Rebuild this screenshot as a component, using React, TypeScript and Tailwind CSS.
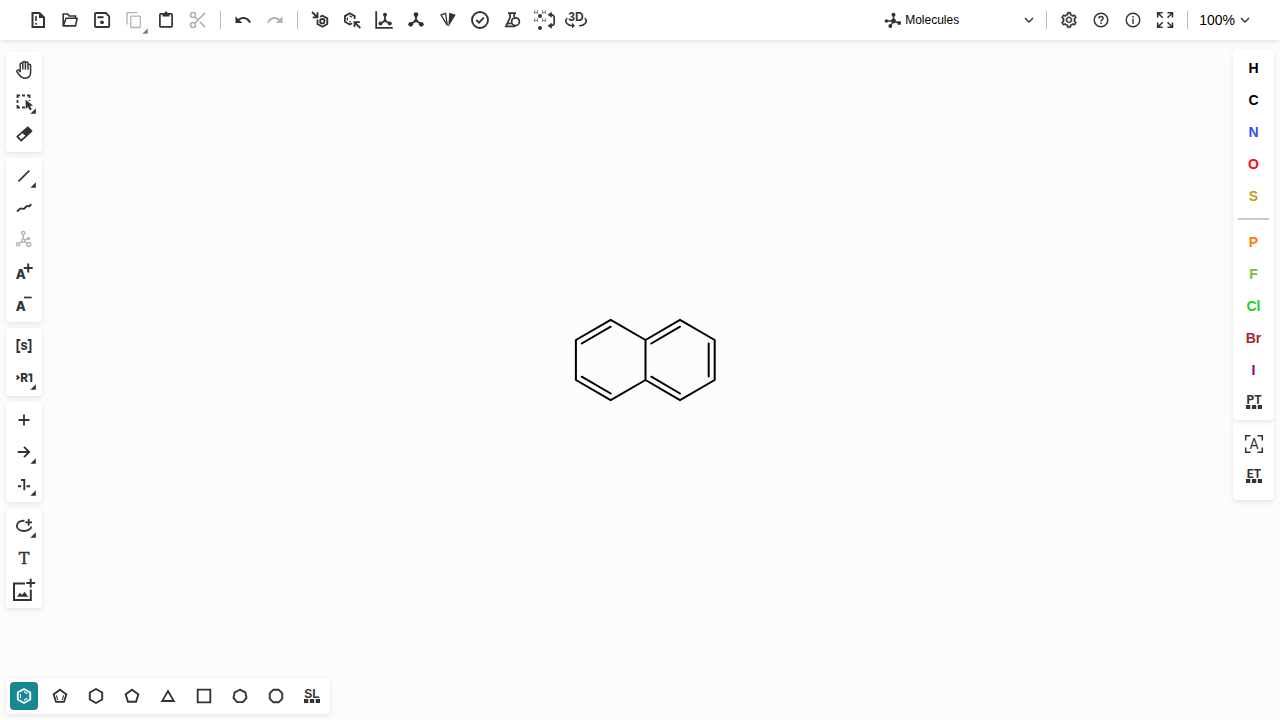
import React from "react";
import { Scissors } from "lucide-react";
import { AiOutlineSetting } from "react-icons/ai";

type Tool = { label: string; icon: React.ReactNode; more?: boolean; disabled?: boolean };

function Svg({ children, w = 2 }: { children: React.ReactNode; w?: number }) {
  return (
    <svg viewBox="0 0 24 24" width={24} height={24} fill="none" stroke="currentColor" strokeWidth={w} aria-hidden="true">
      {children}
    </svg>
  );
}

function Corner() {
  return (
    <svg viewBox="0 0 6 6" width={6} height={6} fill="currentColor" aria-hidden="true">
      <path d="M5.800 .3v5.500H.3z" />
    </svg>
  );
}

function ToolButton({ tool, corner }: { tool: Tool; corner: string }) {
  return (
    <button
      type="button"
      title={tool.label}
      aria-label={tool.label}
      disabled={tool.disabled}
      className="relative flex h-8 w-8 items-center justify-center text-[#333333] disabled:text-[#b3b3b3]"
    >
      {tool.icon}
      {tool.more && <span className={corner}><Corner /></span>}
    </button>
  );
}

function Tri({ stroke = 2 }: { stroke?: number }) {
  return (
    <Svg w={stroke}>
      <path d="M12 7v5.700L7 16M12 12.700L17 16" />
      <g fill="currentColor" stroke="none">
        <circle cx="12" cy="6.700" r="2.400" />
        <circle cx="12" cy="12.500" r="1.700" />
        <circle cx="6.700" cy="16.300" r="2.400" />
        <circle cx="17.300" cy="16.300" r="2.400" />
      </g>
    </Svg>
  );
}

function Dotted({ text, font }: { text: string; font: string }) {
  return (
    <Svg>
      <g fill="currentColor" stroke="none">
        <text x="12" y="14" textAnchor="middle" fontSize="12" fontWeight="700" className={font}>{text}</text>
        <path d="M4 15h4.300v4H4zM9.900 15h4.300v4H9.900zM15.700 15H20v4h-4.300z" />
      </g>
    </Svg>
  );
}

const fileTools: Tool[] = [
  {
    label: "Clear Canvas",
    icon: (
      <Svg>
        <path d="M6.500 5h7l4.500 4.500V19H6.500z" />
        <path d="M13 4l6 6H13z" fill="currentColor" stroke="none" />
        <path d="M10 8v5M10 14.800v2" strokeWidth="1.600" />
      </Svg>
    ),
  },
  {
    label: "Open",
    icon: (
      <Svg w={1.6}>
        <path d="M5.200 17.800V6h4.500l1.500 2h6.300v2" />
        <path d="M5.300 17.900L8 10.200h11.200l-1.700 7.700z" strokeLinejoin="round" />
      </Svg>
    ),
  },
  {
    label: "Save",
    icon: (
      <Svg w={1.8}>
        <path d="M6 5h9.800L19.200 8.400V18q0 1-1 1H6q-1 0-1-1V6q0-1 1-1z" />
        <path d="M7.500 9.200h6" strokeWidth="2" />
        <circle cx="12" cy="14.300" r="1.900" fill="currentColor" stroke="none" />
      </Svg>
    ),
  },
  {
    label: "Copy",
    disabled: true,
    more: true,
    icon: (
      <Svg w={1.3}>
        <path d="M5 16.500V4.700h10.500" />
        <rect x="8.700" y="8.200" width="9.600" height="11.300" rx="0.800" />
      </Svg>
    ),
  },
  {
    label: "Paste",
    icon: (
      <Svg w={1.7}>
        <rect x="5.900" y="5.900" width="12.200" height="12.900" rx="0.800" />
        <path d="M8.500 5.500h2a1.600 1.600 0 013 0h2v3h-7z" fill="currentColor" stroke="none" />
        <circle cx="12" cy="4.800" r="1.400" fill="currentColor" stroke="none" />
      </Svg>
    ),
  },
  { label: "Cut", disabled: true, icon: <Scissors size={20} strokeWidth={2} /> },
];

const undoPath =
  "M12.500 8c-2.650 0-5.050.990-6.900 2.600L2 7v9h9l-3.620-3.620c1.390-1.160 3.160-1.880 5.120-1.880 3.540 0 6.550 2.310 7.600 5.500l2.370-.780C21.080 11.030 17.150 8 12.500 8z";

const historyTools: Tool[] = [
  {
    label: "Undo",
    icon: <svg viewBox="0 0 24 24" width={18} height={18} fill="currentColor" aria-hidden="true"><path d={undoPath} /></svg>,
  },
  {
    label: "Redo",
    disabled: true,
    icon: (
      <svg viewBox="0 0 24 24" width={18} height={18} fill="currentColor" aria-hidden="true">
        <path d={undoPath} transform="matrix(-1 0 0 1 24 0)" />
      </svg>
    ),
  },
];

const structureTools: Tool[] = [
  {
    label: "Aromatize",
    icon: (
      <Svg w={1.8}>
        <path d="M4 4l5 5M9.500 4.300v5H4.700" />
        <path d="M12 8.800L14.500 7.700l4.800 2.700v5.600l-4.800 2.800L9.500 16v-4.500" />
        <circle cx="14.300" cy="13.200" r="2.200" />
      </Svg>
    ),
  },
  {
    label: "Dearomatize",
    icon: (
      <Svg w={1.8}>
        <path d="M12 15.300L9.800 16.500 4.900 13.700V8.100L9.800 5.300l4.900 2.800V11" />
        <path d="M7.300 9.500v3M9.500 7.700l2.700 1.500M9.300 14l1.500-.800" strokeWidth="1.300" />
        <path d="M20.300 20l-5.500-5.500M14.500 19v-4.800h5.300" />
      </Svg>
    ),
  },
  {
    label: "Layout",
    icon: (
      <Svg w={1.8}>
        <path d="M4.200 3.300v16.500h16.500" />
        <path d="M13 7v5.700l-4.500 2.800M13 12.700l4.700 2.800" />
        <g fill="currentColor" stroke="none">
          <circle cx="13" cy="6.700" r="2" />
          <circle cx="13" cy="12.500" r="1.500" />
          <circle cx="8.500" cy="15.500" r="2" />
          <circle cx="17.800" cy="15.500" r="2" />
        </g>
      </Svg>
    ),
  },
  { label: "Clean Up", icon: <Tri /> },
  {
    label: "Calculate CIP",
    icon: (
      <Svg w={1.3}>
        <path d="M5 6.900l4.600-1.600 1.700 12z" />
        <path d="M13.300 4.700l6.400 2L12.300 19z" fill="currentColor" stroke="none" />
      </Svg>
    ),
  },
  {
    label: "Check Structure",
    icon: (
      <Svg w={1.9}>
        <circle cx="12" cy="12" r="8" />
        <path d="M8.300 12l2.700 2.600 4.800-5" />
      </Svg>
    ),
  },
  {
    label: "Calculated Values",
    icon: (
      <Svg w={1.7}>
        <path d="M8 5.200h8M10 5.500v4.300L5.800 18.400h9.500M14.200 5.500v3.500" />
        <circle cx="15.500" cy="13.700" r="3.900" />
        <path d="M7.300 15.500h4" />
      </Svg>
    ),
  },
  {
    label: "Add/Remove explicit hydrogens",
    icon: (
      <Svg w={1.7}>
        <g fill="currentColor" stroke="none" fontSize="6" className="font-['Liberation_Sans']">
          <text x="1.800" y="6">H</text>
          <text x="9.800" y="6">H</text>
          <text x="1.800" y="14">H</text>
          <text x="9.800" y="14">H</text>
          <circle cx="8" cy="8" r="2" />
          <circle cx="8" cy="20" r="2" />
          <path d="M19.800 3.700v6L15.500 6.700zM19.800 14.700v6l-4.300-3z" />
        </g>
        <path d="M18 6.700q4.200 0 4.200 3v5q0 3-4.200 3" />
      </Svg>
    ),
  },
  {
    label: "3D Viewer",
    icon: (
      <Svg w={1.6}>
        <text x="12" y="12.500" textAnchor="middle" fontSize="12" fontWeight="700" fill="currentColor" stroke="none" className="font-['Liberation_Sans']">3D</text>
        <path d="M3.300 10C.3 12.500 1.500 17 9 17.700M20.700 10c3 2.500 2 7-5.700 7.700" />
        <path d="M8 14.800l3 2.900-3 2.700z" fill="currentColor" stroke="none" />
      </Svg>
    ),
  },
];

const infoTools: Tool[] = [
  { label: "Settings", icon: <AiOutlineSetting size={18} stroke="currentColor" strokeWidth={24} /> },
  {
    label: "Help",
    icon: (
      <Svg w={1.5}>
        <circle cx="12" cy="12" r="6.800" />
        <path d="M9.900 10.500q0-2 2.100-2t2.100 1.800q0 1-1.100 1.600t-1 1.600" />
        <path d="M12 14.500v1.500" />
      </Svg>
    ),
  },
  {
    label: "About",
    icon: (
      <Svg w={1.4}>
        <circle cx="12" cy="12" r="6.800" />
        <path d="M12 8v1.500M12 10.700V16" />
      </Svg>
    ),
  },
  {
    label: "Fullscreen mode",
    icon: (
      <Svg w={1.6}>
        <path d="M4.700 9.500V4.700h5M4.700 4.700l5 5M14.500 4.700h5v4.800M19.500 4.700l-5 5M4.700 14.500v4.800h5M4.700 19.300l5-5M19.500 14.500v4.800h-5M19.500 19.300l-5-5" />
      </Svg>
    ),
  },
];

const sideGroups: Tool[][] = [
  [
    {
      label: "Hand tool",
      icon: (
        <Svg w={1.5}>
          <path
            d="M8.200 13.200V6.300a1.300 1.300 0 012.600 0V11V4.700a1.300 1.300 0 012.600 0V11V5.300a1.300 1.300 0 012.600 0V11.300V7.500a1.300 1.300 0 012.600 0V14.300c0 3.700-2.300 5.900-5.600 5.900-2.500 0-4.100-1-5.200-2.800L5 14a1.250 1.250 0 012-1.500l1.200 1.200z"
            strokeLinejoin="round"
          />
        </Svg>
      ),
    },
    {
      label: "Selection",
      more: true,
      icon: (
        <Svg w={1.8}>
          <path d="M5.500 8V5.500H8M10 5.500h3M15 5.500h2.500V8M5.500 10v3M5.500 15v2.500H8M10 17.500h3M17.500 10v1" />
          <path d="M13.500 9.500l7.500 6-3 .5 1.800 3.300-2 1-1.700-3.300-2.300 2z" fill="currentColor" stroke="none" />
        </Svg>
      ),
    },
    {
      label: "Erase",
      icon: (
        <Svg w={1.8}>
          <path d="M15.800 5.300l3.700 3.900L9.200 18.700l-3.900-4.100z" strokeLinejoin="round" />
          <path d="M15.800 5l4 4.200-5.500 5.200-4.600-4z" fill="currentColor" stroke="none" />
        </Svg>
      ),
    },
  ],
  [
    { label: "Single Bond", more: true, icon: <Svg w={1.7}><path d="M6.500 17.300L17.300 6.700" /></Svg> },
    {
      label: "Chain",
      icon: <Svg w={1.9}><path d="M5 15.700L8 12.700q.4-.3.900-.2l2.400.4q.6 0 1-.4l2.300-2.200q.4-.3.900-.2l1.300.2q.4 0 .7-.3L19.300 8.300" /></Svg>,
    },
    {
      label: "Stereochemistry",
      disabled: true,
      icon: (
        <Svg w={1.4}>
          <circle cx="11.300" cy="5" r="1.600" />
          <circle cx="11.300" cy="12.700" r="1.600" />
          <circle cx="6" cy="16.200" r="1.600" />
          <circle cx="16.700" cy="16.500" r="2" />
          <circle cx="16.500" cy="10.500" r="1" />
          <path d="M11.300 6.800v4.100M9.800 13.700l-2.300 1.500M13 13.700l2 1.400M13 12l2.300-1" />
        </Svg>
      ),
    },
    {
      label: "Charge Plus",
      icon: (
        <Svg>
          <text x="3.700" y="18.700" fontSize="13" fontWeight="800" fill="currentColor" stroke="none" className="font-['Inter']">A</text>
          <path d="M16.200 3.500v9M11.700 8h9" />
        </Svg>
      ),
    },
    {
      label: "Charge Minus",
      icon: (
        <Svg>
          <text x="3.700" y="19" fontSize="13" fontWeight="800" fill="currentColor" stroke="none" className="font-['Inter']">A</text>
          <path d="M12 5.500h7.700" strokeWidth="1.700" />
        </Svg>
      ),
    },
  ],
  [
    {
      label: "S-Group",
      icon: (
        <Svg w={1.9}>
          <path d="M8.300 6H5.500v12h2.800M15.700 6h2.800v12h-2.800" />
          <text x="12" y="16" textAnchor="middle" fontSize="14" fontWeight="700" fill="currentColor" stroke="none" className="font-['Roboto']">s</text>
        </Svg>
      ),
    },
    {
      label: "R-Group Label",
      more: true,
      icon: (
        <Svg w={1.8}>
          <path d="M4.700 9.500l2 2-2 2" />
          <text x="8.300" y="16" fontSize="12" fontWeight="900" fill="currentColor" stroke="none" className="font-['Roboto']">R</text>
          <path d="M16.300 8.400h3V16" strokeWidth="2" />
        </Svg>
      ),
    },
  ],
  [
    { label: "Reaction Plus", icon: <Svg w={1.8}><path d="M12 6.500v11M6.500 12h11" /></Svg> },
    { label: "Arrow Open Angle", more: true, icon: <Svg w={1.8}><path d="M5.700 12h11.500M12 6.800l5.200 5.200-5.200 5.200" /></Svg> },
    {
      label: "Reaction Mapping",
      more: true,
      icon: <Svg w={1.9}><path d="M9 8h3.300v10.300M6 14.300h3.300M14.500 14.300h3.500" /></Svg>,
    },
  ],
  [
    {
      label: "Shape Ellipse",
      more: true,
      icon: (
        <Svg w={1.8}>
          <path d="M12.500 6.800C8 6.300 4.800 9 4.800 12s3 5 7.200 5 7.200-2.200 7.200-4.500" />
          <path d="M16.700 5v6.700M13.300 8.300H20" />
        </Svg>
      ),
    },
    {
      label: "Add text",
      icon: (
        <Svg>
          <text x="12" y="18" textAnchor="middle" fontSize="16" fill="currentColor" strokeWidth="0.400" className="font-['DejaVu_Serif']">T</text>
        </Svg>
      ),
    },
    {
      label: "Add Image",
      icon: (
        <Svg>
          <path d="M13 5.500H2V22h16.800V11.500M18.700.8v8.800M14.300 5h8.800" />
          <path d="M5 18.800l3-4 2 2.200 2.500-3.300 3.800 5.100z" fill="currentColor" stroke="none" />
        </Svg>
      ),
    },
  ],
];

const hexagon = "M12 5l6.200 3.500v7L12 19l-6.200-3.500v-7z";
const pentagon = "M12 5.700l6.400 4.700L16 17.800H8l-2.400-7.400z";

const templates: Tool[] = [
  {
    label: "Benzene",
    icon: <Svg w={1.9}><path d={hexagon} /><path d="M8.500 10v4M12 7.800l3.300 1.900M12 16.200l3.300-1.900" strokeWidth="1.100" /></Svg>,
  },
  {
    label: "Cyclopentadiene",
    icon: <Svg w={1.8}><path d={pentagon} /><path d="M8.400 11.300l1.300 4.500M15.600 11.300l-1.300 4.500" strokeWidth="1.100" /></Svg>,
  },
  { label: "Cyclohexane", icon: <Svg w={1.9}><path d={hexagon} /></Svg> },
  { label: "Cyclopentane", icon: <Svg w={1.9}><path d={pentagon} /></Svg> },
  { label: "Cyclopropane", icon: <Svg w={1.8}><path d="M12 7l5.800 10H6.200z" /></Svg> },
  { label: "Cyclobutane", icon: <Svg w={1.800}><path d="M5.700 5.700h12.600v12.600H5.700z" /></Svg> },
  { label: "Cycloheptane", icon: <Svg w={1.9}><path d="M12 5.700l5.300 2.600 1.200 5.600-3.600 4.200H9.100l-3.600-4.200 1.200-5.600z" /></Svg> },
  { label: "Cyclooctane", icon: <Svg w={1.9}><path d="M9.400 5.700h5.200l3.700 3.700v5.200l-3.700 3.700H9.400l-3.700-3.700V9.400z" /></Svg> },
  { label: "Structure Library", icon: <Dotted text="SL" font="font-['Liberation_Sans']" /> },
];

const commonAtoms = [
  { symbol: "H", color: "text-black" },
  { symbol: "C", color: "text-black" },
  { symbol: "N", color: "text-[#304ff7]" },
  { symbol: "O", color: "text-[#ff0d0d]" },
  { symbol: "S", color: "text-[#c99a19]" },
];
const moreAtoms = [
  { symbol: "P", color: "text-[#ff8000]" },
  { symbol: "F", color: "text-[#78bc42]" },
  { symbol: "Cl", color: "text-[#1fd01f]" },
  { symbol: "Br", color: "text-[#a62929]" },
  { symbol: "I", color: "text-[#940094]" },
];

function AtomButton({ symbol, color }: { symbol: string; color: string }) {
  return (
    <button type="button" className={`h-8 w-full text-center text-sm font-bold ${color}`}>
      {symbol}
    </button>
  );
}

function Divider() {
  return <div className="mx-1.5 h-4.5 w-px bg-[#b4bbda]" />;
}

function Chevron() {
  return (
    <svg viewBox="0 0 10 6" width={10} height={6} fill="none" stroke="#333333" strokeWidth={1.4} aria-hidden="true">
      <path d="M1 1l4 4 4-4" />
    </svg>
  );
}

function ToolRow({ tools }: { tools: Tool[] }) {
  return (
    <div className="flex">
      {tools.map((t) => <ToolButton key={t.label} tool={t} corner="absolute right-0.5 bottom-0.5 text-[#808080]" />)}
    </div>
  );
}

export default function App() {
  return (
    <div className="relative flex min-h-screen flex-col bg-[#fcfcfc] font-['Liberation_Sans',sans-serif] text-black">
      <header className="relative flex h-10 items-center bg-white pr-6 pl-5.5 shadow-[0_2px_5px_rgba(103,104,132,0.15)]">
        <ToolRow tools={fileTools} />
        <Divider />
        <ToolRow tools={historyTools} />
        <Divider />
        <ToolRow tools={structureTools} />
        <div className="ml-auto flex items-center">
          <div className="relative flex w-39 items-center">
            <svg viewBox="0 0 18 18" width={18} height={18} className="pointer-events-none absolute left-0 text-[#333333]" fill="currentColor" stroke="currentColor" strokeWidth={1.4} aria-hidden="true">
              <path d="M9.500 3.700V10H2.500M9.500 10l5.500 2M9.500 10l-3 5" fill="none" />
              <g stroke="none">
                <circle cx="9.500" cy="3.700" r="2" />
                <circle cx="9.500" cy="10" r="2.400" />
                <circle cx="2.400" cy="10" r="1.800" />
                <circle cx="15.200" cy="12" r="1.900" />
                <circle cx="6.300" cy="15" r="1.900" />
              </g>
            </svg>
            <select aria-label="Editor mode" className="w-full appearance-none bg-transparent pl-[21px] text-xs text-black">
              <option>Molecules</option>
              <option>Macromolecules</option>
            </select>
            <span className="pointer-events-none absolute right-1.5"><Chevron /></span>
          </div>
          <Divider />
          <ToolRow tools={infoTools} />
          <Divider />
          <button type="button" aria-label="Zoom 100%" className="flex items-center gap-[5px] pr-1.5 pl-[5px] text-sm">
            100%
            <Chevron />
          </button>
        </div>
      </header>

      <svg viewBox="0 0 170 110" width={170} height={110} className="absolute top-[305px] left-[560px]" fill="none" stroke="#000000" strokeWidth={2} strokeLinecap="round" strokeLinejoin="round" role="img" aria-label="Naphthalene">
        <path d="M85.500 35L50.700 14.800 15.900 35v40l34.800 20.200L85.500 75zM85.500 35L120 14.800 154.700 35v40L120 95.200 85.500 75" />
        <path d="M21.700 38.500L50.700 21.700M91.300 38.500L120 21.700M148.700 38.500v33M21.700 71.700l29 16.800M91.300 71.700L120 88.500" />
      </svg>

      <main className="flex flex-1 items-start justify-between px-1.5">
        <nav aria-label="Drawing tools" className="relative flex flex-col gap-1.5 pt-3">
          {sideGroups.map((group) => (
            <div key={group[0].label} className="rounded bg-white p-0.5 shadow-[0_2px_5px_rgba(103,104,132,0.15)]">
              {group.map((t) => <ToolButton key={t.label} tool={t} corner="absolute right-1 bottom-1" />)}
            </div>
          ))}
        </nav>
        <nav aria-label="Atoms" className="relative w-[41px] pt-2.5">
          <div className="relative rounded bg-white py-0.5 shadow-[0_2px_5px_rgba(103,104,132,0.15)]">
            {commonAtoms.map((a) => <AtomButton key={a.symbol} {...a} />)}
            <div className="mx-[5px] my-1.5 h-0.5 bg-[#c3cbd9]" />
            {moreAtoms.map((a) => <AtomButton key={a.symbol} {...a} />)}
            <button type="button" aria-label="Periodic Table" className="flex h-8 w-full items-center justify-center text-[#333333]">
              <Dotted text="PT" font="font-['Roboto']" />
            </button>
          </div>
          <div className="rounded bg-white py-2 shadow-[0_2px_5px_rgba(103,104,132,0.15)]">
            <button type="button" aria-label="Any Atom" className="flex h-8 w-full items-center justify-center text-[#333333]">
              <Svg w={1.5}>
                <path d="M3.700 8.500V3.700h4.800M15.500 3.700h4.800v4.800M20.300 15.500v4.800h-4.800M8.500 20.300H3.700v-4.800" />
                <text x="12" y="17" textAnchor="middle" fontSize="14" fill="currentColor" stroke="none" className="font-['Roboto']">A</text>
              </Svg>
            </button>
            <button type="button" aria-label="Extended Table" className="flex h-8 w-full items-center justify-center text-[#333333]">
              <Dotted text="ET" font="font-['Roboto']" />
            </button>
          </div>
        </nav>
      </main>

      <footer className="relative flex px-1.5 pb-1.5">
        <div className="flex gap-2 rounded bg-white p-1 shadow-[0_2px_5px_rgba(103,104,132,0.15)]">
          {templates.map((t, i) => (
            <button
              key={t.label}
              type="button"
              title={t.label}
              aria-label={t.label}
              aria-pressed={i === 0}
              className="flex h-7 w-7 items-center justify-center rounded text-[#333333] aria-pressed:bg-[#188794] aria-pressed:text-white"
            >
              {t.icon}
            </button>
          ))}
        </div>
      </footer>
    </div>
  );
}
